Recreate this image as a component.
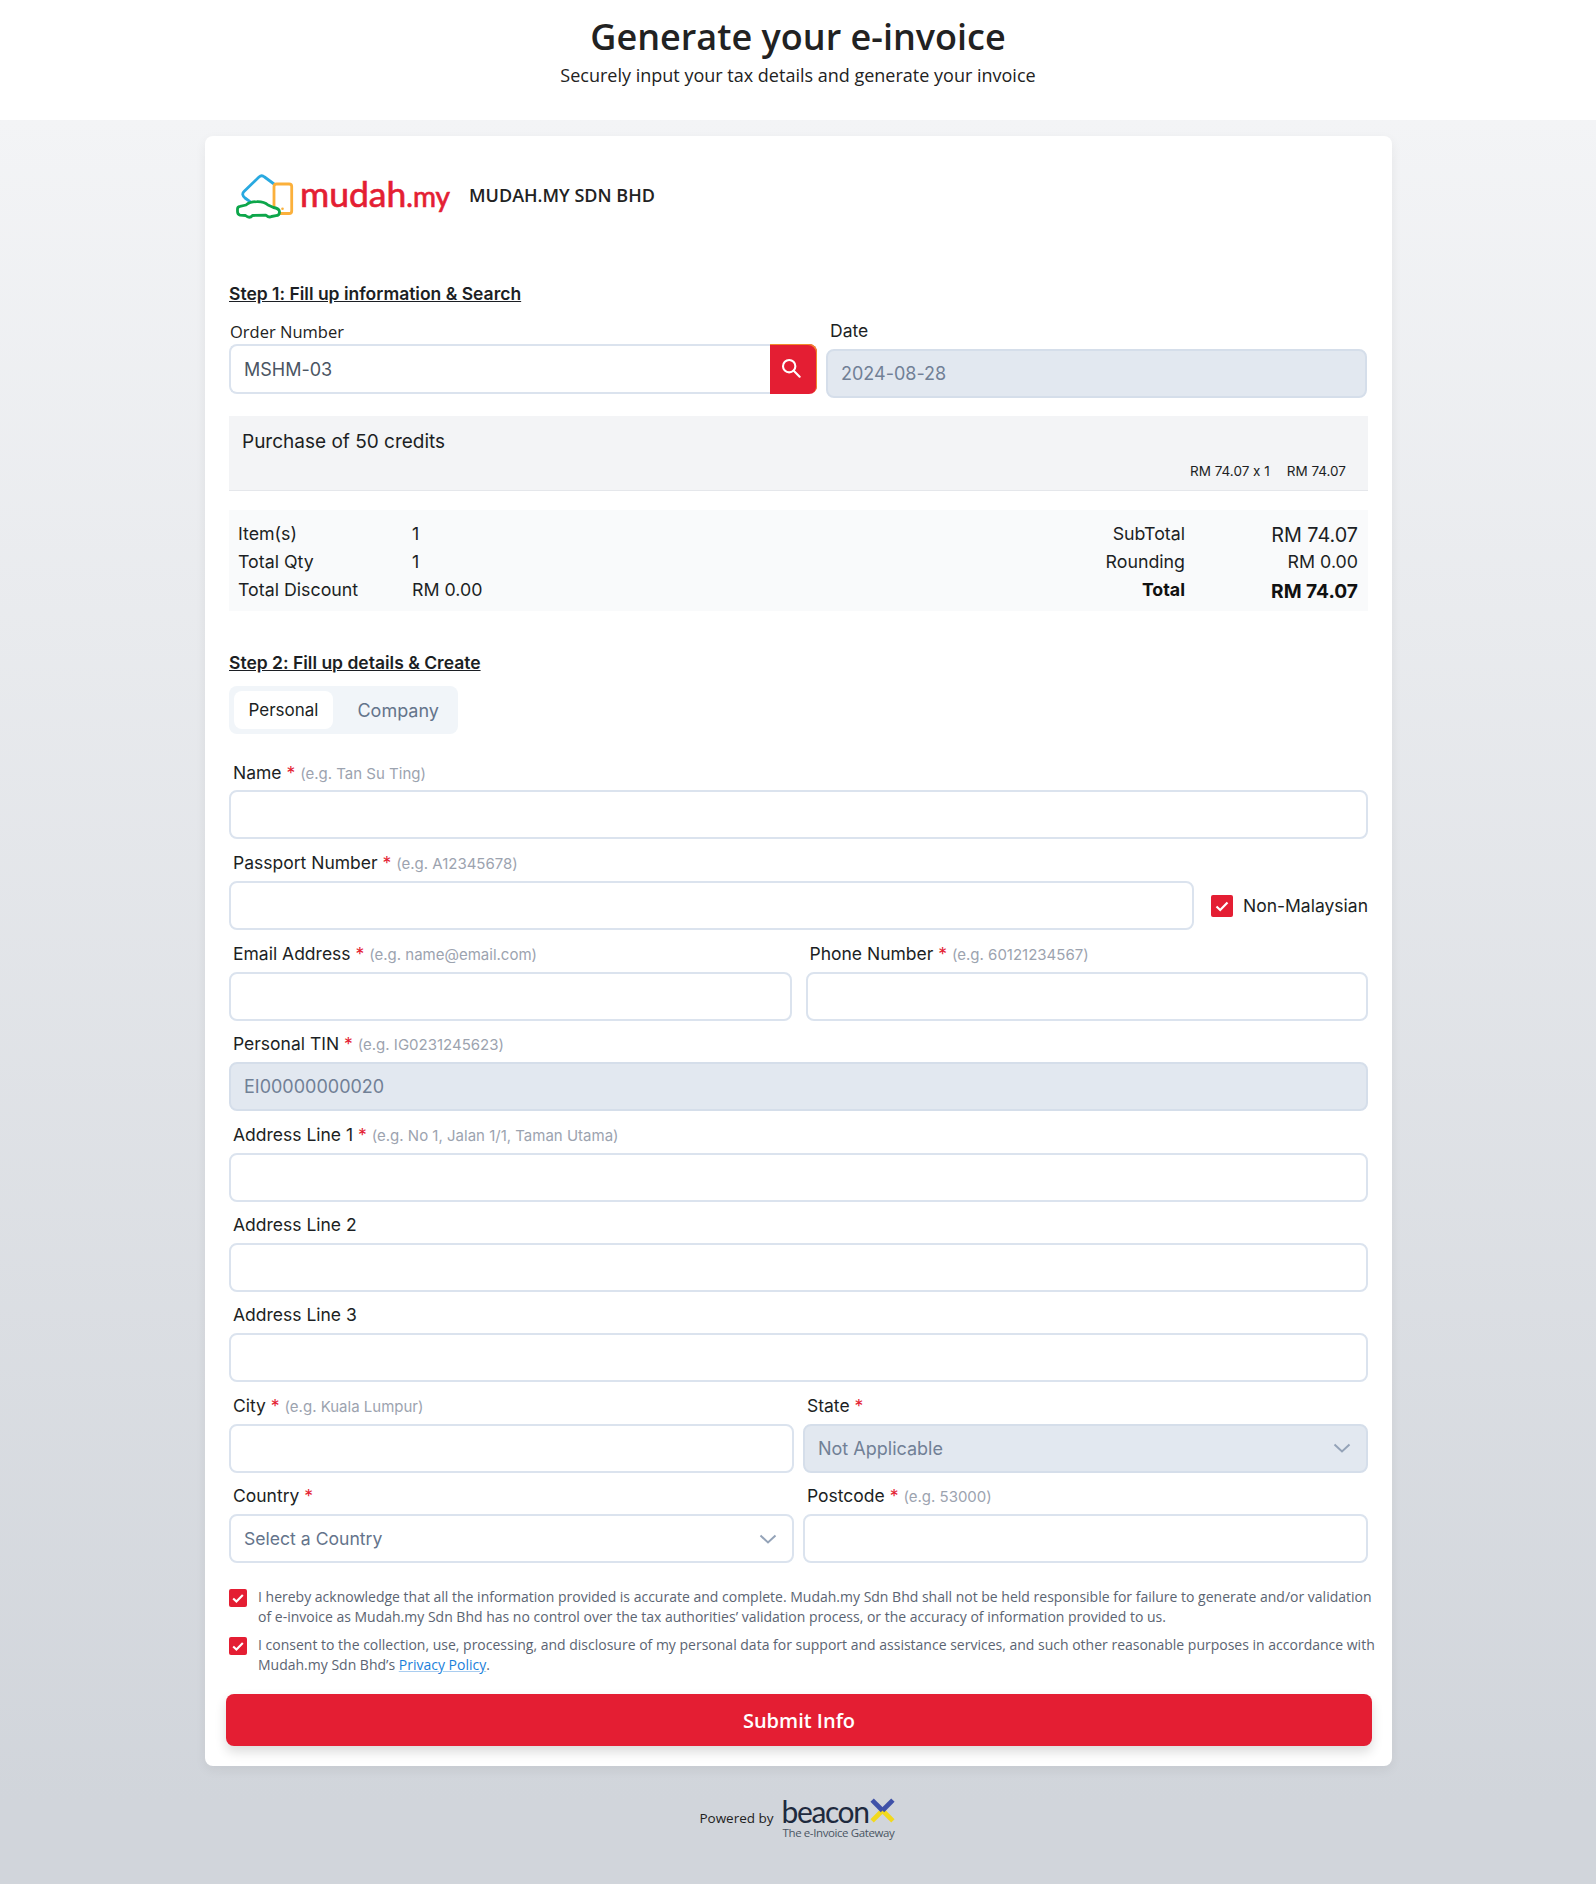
<div class="page">
  <header class="top">
    <h1>Generate your e-invoice</h1>
    <p>Securely input your tax details and generate your invoice</p>
  </header>

  <main class="card">
    <div class="brand">
      <div class="logo">
        <svg class="logo-icon" width="60" height="46" viewBox="0 0 60 46" fill="none" stroke-width="2.8" stroke-linejoin="round" stroke-linecap="round">
          <path d="M14 27.7 L9 24 Q5 20.5 8 17.5 L23 3 Q25.7 .6 28.5 3 L38 10" stroke="#29a9e0"/>
          <rect x="38" y="10" width="17.7" height="29.5" rx="2.6" stroke="#fbb03b"/>
          <circle cx="46.5" cy="34.7" r="1.3" fill="#fbb03b" stroke="none"/>
          <path d="M1.5 35 Q1.5 32.7 4 32.3 L10 31 Q14 27.7 21 27.7 Q28 27.5 32 31 L37.5 33.5 Q43.5 34.5 43.5 38 Q43.5 41.5 40 41.7 L35.5 42.5 Q33 44 30 41.2 L16.5 41.5 Q13.5 45 9.5 41.5 L4 41.2 Q1.5 40.5 1.5 37.5 Z" fill="#fff" stroke="#0da64a"/>
        </svg>
        <span class="logo-text">mudah<span class="logo-my">.my</span></span>
      </div>
      <span class="company">MUDAH.MY SDN BHD</span>
    </div>

    <h2 class="step first">Step 1: Fill up information &amp; Search</h2>

    <div class="search-row">
      <div class="order">
        <label class="order-label" for="order">Order Number</label>
        <div class="search-box">
          <input id="order" class="field joined" value="MSHM-03" />
          <button class="search-btn" aria-label="Search">
            <svg width="20" height="20" viewBox="0 0 22 22" fill="none" stroke="#fff" stroke-width="2.3" stroke-linecap="round">
              <circle cx="9" cy="9" r="6.8"/>
              <path d="M14 14 L20.5 20.5"/>
            </svg>
          </button>
        </div>
      </div>
      <div class="date">
        <label class="date-label" for="date">Date</label>
        <input id="date" class="field off" value="2024-08-28" disabled />
      </div>
    </div>

    <section class="purchase">
      <div class="purchase-name">Purchase of 50 credits</div>
      <div class="purchase-meta"><span>RM 74.07 x 1</span><span>RM 74.07</span></div>
    </section>

    <section class="summary">
      <dl class="sum-left">
        <dt>Item(s)</dt><dd>1</dd>
        <dt>Total Qty</dt><dd>1</dd>
        <dt>Total Discount</dt><dd>RM 0.00</dd>
      </dl>
      <dl class="sum-right">
        <dt>SubTotal</dt><dd class="big">RM 74.07</dd>
        <dt>Rounding</dt><dd>RM 0.00</dd>
        <dt class="strong">Total</dt><dd class="big strong">RM 74.07</dd>
      </dl>
    </section>

    <h2 class="step second">Step 2: Fill up details &amp; Create</h2>

    <div class="tabs">
      <button class="tab active">Personal</button>
      <button class="tab">Company</button>
    </div>

    <div class="form">
      <div class="f">
        <div class="lab lab-first">Name <b>*</b> <i>(e.g. Tan Su Ting)</i></div>
        <input class="field" />
      </div>

      <div class="row passport">
        <div class="f grow">
          <div class="lab">Passport Number <b>*</b> <i>(e.g. A12345678)</i></div>
          <input class="field" />
        </div>
        <div class="nonmy">
          <span class="check big-check">
            <svg width="16" height="16" viewBox="0 0 16 16" fill="none" stroke="#fff" stroke-width="2.2"><path d="M2.5 8.5 L6.2 12 L13.5 4.5"/></svg>
          </span>
          <span>Non-Malaysian</span>
        </div>
      </div>

      <div class="row even">
        <div class="f">
          <div class="lab">Email Address <b>*</b> <i>(e.g. name@email.com)</i></div>
          <input class="field" />
        </div>
        <div class="f">
          <div class="lab">Phone Number <b>*</b> <i>(e.g. 60121234567)</i></div>
          <input class="field" />
        </div>
      </div>

      <div class="f">
        <div class="lab">Personal TIN <b>*</b> <i>(e.g. IG0231245623)</i></div>
        <input class="field off" value="EI00000000020" disabled />
      </div>

      <div class="f">
        <div class="lab">Address Line 1 <b>*</b> <i>(e.g. No 1, Jalan 1/1, Taman Utama)</i></div>
        <input class="field" />
      </div>
      <div class="f">
        <div class="lab">Address Line 2</div>
        <input class="field" />
      </div>
      <div class="f">
        <div class="lab">Address Line 3</div>
        <input class="field" />
      </div>

      <div class="row tight">
        <div class="f">
          <div class="lab">City <b>*</b> <i>(e.g. Kuala Lumpur)</i></div>
          <input class="field" />
        </div>
        <div class="f">
          <div class="lab">State <b>*</b></div>
          <div class="field select off">
            <span>Not Applicable</span>
            <svg width="20" height="12" viewBox="0 0 20 12" fill="none" stroke="#94a3b8" stroke-width="2"><path d="M2.5 2.5 L10 9.5 L17.5 2.5"/></svg>
          </div>
        </div>
      </div>

      <div class="row tight">
        <div class="f">
          <div class="lab">Country <b>*</b></div>
          <div class="field select">
            <span class="muted">Select a Country</span>
            <svg width="20" height="12" viewBox="0 0 20 12" fill="none" stroke="#94a3b8" stroke-width="2"><path d="M2.5 2.5 L10 9.5 L17.5 2.5"/></svg>
          </div>
        </div>
        <div class="f">
          <div class="lab">Postcode <b>*</b> <i>(e.g. 53000)</i></div>
          <input class="field" />
        </div>
      </div>
    </div>

    <div class="terms">
      <div class="term">
        <span class="check">
          <svg width="14" height="14" viewBox="0 0 16 16" fill="none" stroke="#fff" stroke-width="2.4"><path d="M2.5 8.5 L6.2 12 L13.5 4.5"/></svg>
        </span>
        <p>I hereby acknowledge that all the information provided is accurate and complete. Mudah.my Sdn Bhd shall not be held responsible for failure to generate and/or validation of e-invoice as Mudah.my Sdn Bhd has no control over the tax authorities’ validation process, or the accuracy of information provided to us.</p>
      </div>
      <div class="term">
        <span class="check">
          <svg width="14" height="14" viewBox="0 0 16 16" fill="none" stroke="#fff" stroke-width="2.4"><path d="M2.5 8.5 L6.2 12 L13.5 4.5"/></svg>
        </span>
        <p>I consent to the collection, use, processing, and disclosure of my personal data for support and assistance services, and such other reasonable purposes in accordance with Mudah.my Sdn Bhd’s <a href="#privacy">Privacy Policy</a>.</p>
      </div>
    </div>

    <button class="submit">Submit Info</button>
  </main>

  <footer class="foot">
    <span class="powered">Powered by</span>
    <div class="beacon">
      <div class="beacon-top">
        <span class="beacon-word">beacon</span>
        <svg class="beacon-x" width="27" height="27" viewBox="0 0 26 26" fill="none" stroke-width="4.6">
          <path d="M3 23 L13 13" stroke="#f2d91d"/>
          <path d="M23 23 L13 13" stroke="#f2d91d"/>
          <path d="M3 3 L13 13" stroke="#3f51a8"/>
          <path d="M23 3 L13 13" stroke="#3f51a8"/>
        </svg>
      </div>
      <div class="beacon-sub">The e-Invoice Gateway</div>
    </div>
  </footer>
</div>

<style>
  :global(body) { margin: 0; }
  * { box-sizing: border-box; }
  .page {
    width: 1596px;
    height: 1884px;
    font-family: "Inter", "Liberation Sans", sans-serif;
    font-feature-settings: "calt" 0;
    color: #1c1f24;
    background: linear-gradient(to bottom, #f3f4f6 120px, #d1d5db 1800px);
    overflow: hidden;
  }
  .top {
    height: 120px;
    background: #fff;
    text-align: center;
    font-family: "Open Sans", sans-serif;
    padding-top: 14px;
    color: #222;
  }
  .top h1 { margin: 0; font-size: 36px; line-height: 46px; font-weight: 600; }
  .top p { margin: 1px 0 0; font-size: 18px; line-height: 28px; }

  .card {
    width: 1187px;
    height: 1630px;
    margin: 16px 0 0 205px;
    padding: 0 24px;
    background: #fff;
    border-radius: 8px;
    box-shadow: 0 4px 12px rgba(0,0,0,.06);
    position: relative;
  }
  .brand {
    height: 98px;
    padding: 38px 0 0 7px;
    display: flex;
    align-items: flex-start;
  }
  .logo { display: flex; align-items: flex-start; width: 233px; }
  .logo-icon { flex: none; }
  .logo-text {
    margin-left: 4px;
    margin-top: -3px;
    font-family: "Lato", sans-serif;
    font-weight: 400;
    font-size: 35.5px;
    line-height: 46px;
    color: #e41e33;
    -webkit-text-stroke: .7px #e41e33;
    white-space: nowrap;
  }
  .logo-my { font-size: 28px; }
  .company {
    font-family: "Open Sans", sans-serif;
    font-size: 18px;
    font-weight: 600;
    line-height: 24px;
    margin-top: 9px;
    color: #222;
  }

  .step {
    margin: 0;
    font-family: "Inter", sans-serif;
    font-size: 17.5px;
    font-weight: 600;
    line-height: 24px;
    text-decoration: underline;
    color: #1c1f24;
  }
  .step.first { margin-top: 48px; }
  .step.second { margin-top: 40px; }

  .search-row { display: flex; gap: 9px; margin-top: 12px; height: 74px; }
  .order { width: 588px; }
  .date { width: 541px; }
  .order-label {
    display: block;
    padding: 2px 0 0 1px;
    font-family: "Open Sans", sans-serif;
    font-size: 16.5px;
    font-weight: 500;
    line-height: 24px;
    height: 26px;
    color: #222;
  }
  .date-label {
    display: block;
    padding-left: 4px;
    font-size: 17.5px;
    line-height: 26px;
    height: 31px;
  }
  .search-box { display: flex; }
  .search-btn {
    flex: none;
    width: 47px;
    height: 50px;
    border: 0;
    padding: 0 5px 2px 0;
    background: #e41e33;
    border-radius: 0 8px 8px 0;
    box-shadow: inset -1px 1px 0 #f08a2c;
    display: flex;
    align-items: center;
    justify-content: center;
  }

  .field {
    display: block;
    width: 100%;
    height: 49px;
    border: 2px solid #dbe3ee;
    border-radius: 8px;
    background: #fff;
    padding: 0 13px;
    font: inherit;
    font-size: 18px;
    color: #4b5563;
    outline: none;
  }
  .field.joined { border-radius: 8px 0 0 8px; border-right: 0; height: 50px; }
  .field.off { background: #e2e8f0; border-color: #d5deea; color: #64748b; opacity: 1; -webkit-text-fill-color: #718096; }
  .select { display: flex; align-items: center; justify-content: space-between; padding-right: 14px; }
  .select .muted { color: #64748b; font-size: 17.6px; }
  .select.off { color: #718096; }

  .purchase {
    margin-top: 24px;
    height: 75px;
    background: #f3f4f6;
    border-bottom: 1px solid #e5e7eb;
    padding: 13px 22px 0 13px;
  }
  .purchase-name { font-size: 19px; line-height: 26px; }
  .purchase-meta {
    display: flex;
    justify-content: flex-end;
    gap: 17px;
    margin-top: 6px;
    font-size: 13.5px;
    line-height: 20px;
  }

  .summary {
    margin-top: 19px;
    height: 101px;
    background: #f9fafb;
    padding: 10px 10px 0 9px;
    display: flex;
    justify-content: space-between;
    align-items: flex-start;
    font-size: 17.8px;
    line-height: 28px;
  }
  dl { margin: 0; display: grid; }
  dd { margin: 0; }
  .sum-left { grid-template-columns: 174px auto; }
  .sum-right { grid-template-columns: 100px 173px; text-align: right; }
  .sum-right .big { font-size: 19.8px; transform: translateY(1px); }
  .sum-right .big.strong { font-size: 19.2px; }
  .strong { font-weight: 700; color: #111; }

  .tabs {
    display: flex;
    width: 229px;
    height: 48px;
    margin-top: 11px;
    padding: 5px;
    background: #f1f5f9;
    border-radius: 8px;
    gap: 9.5px;
  }
  .tab {
    border: 0;
    background: transparent;
    border-radius: 8px;
    height: 38px;
    padding: 0 15px;
    font: inherit;
    font-size: 18px;
    color: #64748b;
  }
  .tab.active { background: #fff; color: #1c1f24; font-size: 17px; padding: 0 14.5px; }

  .form { margin-top: 15px; display: flex; flex-direction: column; }
  .f { min-width: 0; }
  .lab {
    height: 30px;
    margin-top: 11.4px;
    padding-left: 4px;
    font-size: 17.5px;
    line-height: 24px;
    white-space: nowrap;
  }
  .lab-first { height: 29px; margin-top: 12.4px; }
  .lab b { color: #e41e33; font-weight: 400; }
  .lab i { font-style: normal; font-size: 15px; color: #9ca3af; }

  .row { display: flex; }
  .row .f { flex: 1 1 0; }
  .row.passport { gap: 18px; }
  .row.even { gap: 14px; }
  .row.tight { gap: 9px; }
  .nonmy {
    flex: none;
    display: flex;
    align-items: center;
    gap: 10px;
    font-size: 17.5px;
    margin-top: 42px;
    height: 49px;
    width: 156px;
    justify-content: flex-end;
    white-space: nowrap;
  }
  .check {
    flex: none;
    width: 18px;
    height: 18px;
    border-radius: 2px;
    background: #e41e33;
    display: flex;
    align-items: center;
    justify-content: center;
  }
  .big-check { width: 22px; height: 22px; }

  .terms { margin-top: 24px; width: 1148px; }
  .term { display: flex; gap: 11px; margin-bottom: 8px; }
  .term p {
    margin: 0;
    flex: 1;
    font-family: "Open Sans", sans-serif;
    font-size: 14px;
    line-height: 20px;
    color: #5b6472;
  }
  .term .check { margin-top: 2px; }
  .term a { color: #1a7fdb; text-decoration: underline; text-decoration-color: #a9cdf0; }

  .submit {
    position: absolute;
    left: 21px;
    bottom: 20px;
    width: 1146px;
    height: 52px;
    border: 0;
    border-radius: 8px;
    background: #e41e33;
    color: #fff;
    font-family: "Open Sans", sans-serif;
    font-size: 20px;
    font-weight: 600;
    box-shadow: 0 6px 12px rgba(0,0,0,.14);
  }

  .foot {
    margin-top: 30px;
    display: flex;
    justify-content: center;
    align-items: flex-start;
    gap: 9px;
  }
  .powered { font-family: "Open Sans", sans-serif; font-size: 13.5px; margin-top: 13px; color: #222; }
  .beacon { width: 114px; }
  .beacon-top { display: flex; align-items: flex-end; height: 30px; margin-left: -1px; }
  .beacon-x { margin-bottom: 2px; flex: none; }
  .beacon-word {
    font-family: "Lato", sans-serif;
    font-size: 30px;
    line-height: 30px;
    letter-spacing: -1.4px;
    color: #1e2a3e;
  }
  .beacon-sub { font-family: "Open Sans", sans-serif; font-size: 11.5px; line-height: 14px; color: #4b5563; letter-spacing: -.4px; margin-top: 0; white-space: nowrap; }
</style>
